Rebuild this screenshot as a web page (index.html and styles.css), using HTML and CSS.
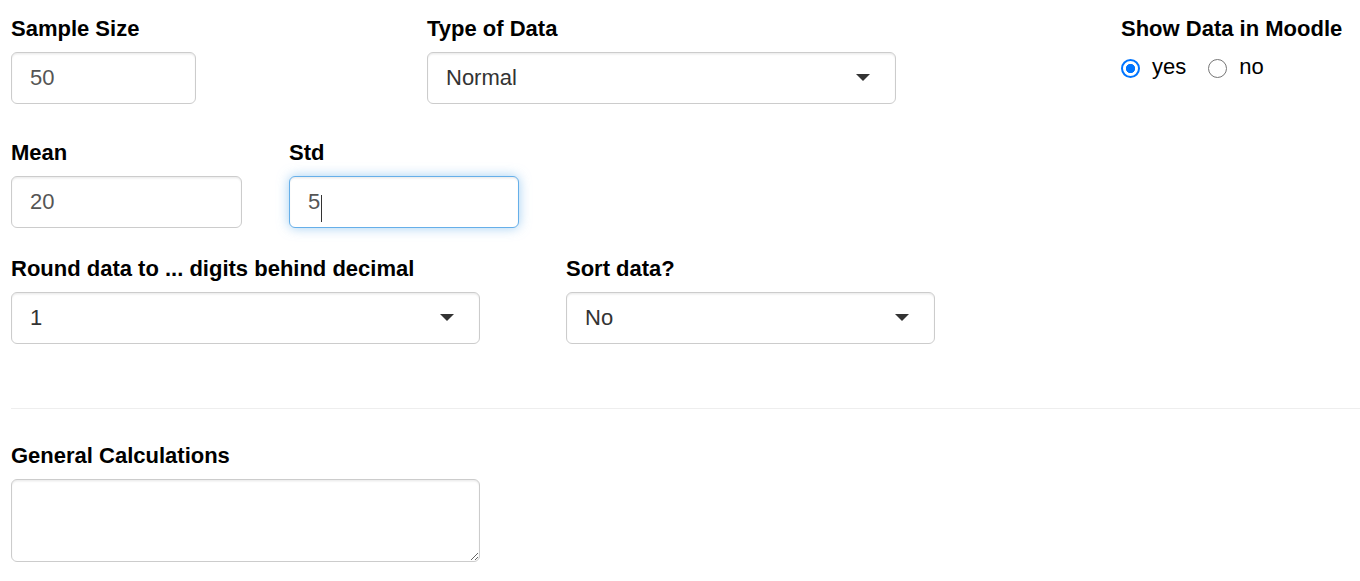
FILE: index.html
```html
<!DOCTYPE html>
<html lang="en">
<head>
<meta charset="utf-8">
<title>Data generator</title>
<link rel="stylesheet" href="styles.css">
</head>
<body>
<div class="page">
  <div class="row row-top">
    <div class="field">
      <label class="lbl" for="n">Sample Size</label>
      <input class="input w-sample" id="n" type="text" value="50">
    </div>
    <div class="field">
      <label class="lbl">Type of Data</label>
      <div class="select w-wide">Normal</div>
    </div>
    <div class="field">
      <label class="lbl">Show Data in Moodle</label>
      <div class="radios">
        <label class="opt"><input class="radio" type="radio" name="moodle" checked><span>yes</span></label>
        <label class="opt"><input class="radio" type="radio" name="moodle"><span>no</span></label>
      </div>
    </div>
  </div>

  <div class="row row-mid">
    <div class="field">
      <label class="lbl" for="mean">Mean</label>
      <input class="input w-mean" id="mean" type="text" value="20">
    </div>
    <div class="field">
      <label class="lbl" for="std">Std</label>
      <div class="focus-wrap">
        <input class="input w-std focused" id="std" type="text" value="5">
        <span class="caret"></span>
      </div>
    </div>
  </div>

  <div class="row row-round">
    <div class="field">
      <label class="lbl">Round data to ... digits behind decimal</label>
      <div class="select w-wide">1</div>
    </div>
    <div class="field">
      <label class="lbl">Sort data?</label>
      <div class="select w-sort">No</div>
    </div>
  </div>

  <hr class="divider">

  <div class="field">
    <label class="lbl" for="calc">General Calculations</label>
    <textarea class="textarea" id="calc"></textarea>
  </div>
</div>
</body>
</html>
```

FILE: styles.css
```css
html, body {
  margin: 0;
  background: #fff;
}

body {
  font-family: "Liberation Sans", Arial, Helvetica, sans-serif;
  font-size: 22px;
  line-height: 30px;
  color: #333;
}

.page {
  padding: 14px 0 0 11px;
}

.row {
  display: grid;
}

.row-top {
  grid-template-columns: 416px 694px 1fr;
}

.row-mid {
  grid-template-columns: 278px 1fr;
  margin-top: 34px;
}

.row-round {
  grid-template-columns: 555px 1fr;
  margin-top: 26px;
}

.lbl {
  display: block;
  height: 30px;
  margin-bottom: 8px;
  font-weight: bold;
  color: #000;
}

.input {
  display: block;
  box-sizing: border-box;
  height: 52px;
  margin: 0;
  padding: 0 18px;
  border: 1px solid #ccc;
  border-radius: 6px;
  background: #fff;
  font: inherit;
  color: #555;
  box-shadow: inset 0 1.5px 1.5px rgba(0, 0, 0, 0.075);
  outline: none;
}

.w-sample { width: 185px; }
.w-mean { width: 231px; }
.w-std { width: 230px; }

.input.focused {
  border-color: #66afe9;
  box-shadow: inset 0 1.5px 1.5px rgba(0, 0, 0, 0.075), 0 0 12px rgba(102, 175, 233, 0.6);
}

.focus-wrap {
  position: relative;
  width: 230px;
}

.caret {
  position: absolute;
  left: 32px;
  top: 19px;
  width: 1px;
  height: 27px;
  background: #333;
}

.select {
  position: relative;
  display: flex;
  align-items: center;
  box-sizing: border-box;
  height: 52px;
  padding: 0 18px;
  border: 1px solid #ccc;
  border-radius: 6px;
  background: #fff;
  color: #333;
  box-shadow: inset 0 1.5px 1.5px rgba(0, 0, 0, 0.075);
}

.select::after {
  content: "";
  position: absolute;
  right: 25px;
  top: 50%;
  margin-top: -4px;
  width: 0;
  height: 0;
  border-left: 7px solid transparent;
  border-right: 7px solid transparent;
  border-top: 7px solid #333;
}

.w-wide { width: 469px; }
.w-sort { width: 369px; }

.radios {
  display: flex;
  align-items: center;
  gap: 22px;
  height: 30px;
}

.opt {
  display: flex;
  align-items: center;
  gap: 12px;
  color: #000;
}

.radio {
  appearance: none;
  -webkit-appearance: none;
  box-sizing: border-box;
  width: 19px;
  height: 19px;
  margin: 3px 0 0 0;
  border: 1.5px solid #767676;
  border-radius: 50%;
  background: #fff;
}

.radio:checked {
  border: 2px solid #0075ff;
  background: radial-gradient(circle, #0075ff 0 4.3px, #fff 5px);
}

.divider {
  margin: 64px 0 32px 0;
  border: 0;
  border-top: 1px solid #eee;
  height: 0;
}

.textarea {
  display: block;
  box-sizing: border-box;
  width: 469px;
  height: 83px;
  margin: 0;
  padding: 9px 18px;
  border: 1px solid #ccc;
  border-radius: 6px;
  font: inherit;
  color: #555;
  box-shadow: inset 0 1.5px 1.5px rgba(0, 0, 0, 0.075);
  resize: both;
}
```
